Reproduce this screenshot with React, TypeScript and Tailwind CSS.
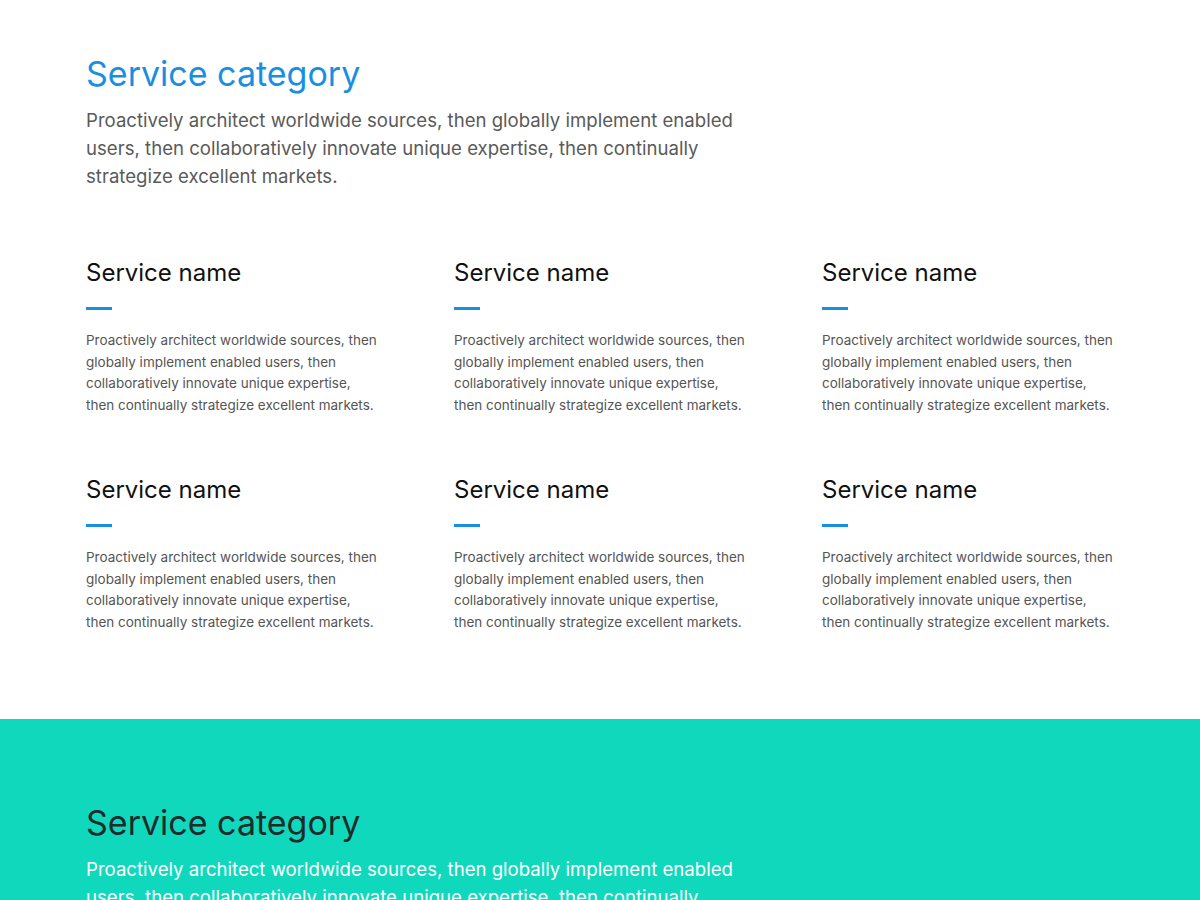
import React from "react";

const BODY =
  "Proactively architect worldwide sources, then globally implement enabled users, then collaboratively innovate unique expertise, then continually strategize excellent markets.";

const SERVICES = Array.from({ length: 6 }, () => ({
  name: "Service name",
  text: BODY,
}));

function Service({ name, text }: { name: string; text: string }) {
  return (
    <div className="max-w-[296px]">
      <h3 className="text-[24px] leading-[32px] text-[#111]">{name}</h3>
      <div className="mt-[18px] h-[3px] w-[26px] bg-[#1a8fe0]" />
      <p className="mt-[20px] text-[13.5px] leading-[21.5px] text-[#555]">{text}</p>
    </div>
  );
}

export default function App() {
  return (
    <div
      className="min-h-screen bg-white"
      style={{ fontFamily: "Inter, 'Noto Sans', sans-serif" }}
    >
      <section className="px-[86px] pt-[52px] pb-[86px]">
        <h1 className="text-[34px] leading-[44px] text-[#1a8fe0]">Service category</h1>
        <p className="mt-[10px] max-w-[670px] text-[18.6px] leading-[28px] text-[#5a5a5a]">
          {BODY}
        </p>
        <div className="mt-[67px] grid grid-cols-[368px_368px_1fr] gap-y-[58px]">
          {SERVICES.map((s, i) => (
            <Service key={i} name={s.name} text={s.text} />
          ))}
        </div>
      </section>

      <section className="bg-[#10d8bc] px-[86px] pt-[82px] pb-[80px]">
        <h2 className="text-[34px] leading-[44px] text-[#1c2b2b]">Service category</h2>
        <p className="mt-[10px] max-w-[670px] text-[18.6px] leading-[28px] text-white">
          {BODY}
        </p>
      </section>
    </div>
  );
}
